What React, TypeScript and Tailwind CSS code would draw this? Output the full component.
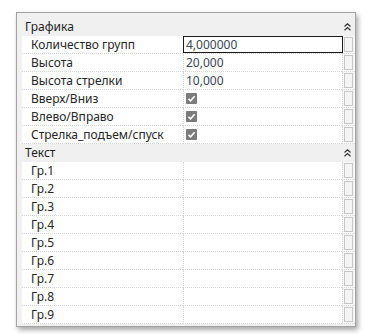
import React from "react";

const font = { fontFamily: '"Segoe UI", "Noto Sans", "Open Sans", sans-serif' };

function Chevrons() {
  return (
    <svg width="7" height="8" viewBox="0 0 7 8" className="block">
      <path d="M0.5 3.5 L3.5 0.8 L6.5 3.5" fill="none" stroke="#333" strokeWidth="1.2" />
      <path d="M0.5 7.2 L3.5 4.5 L6.5 7.2" fill="none" stroke="#333" strokeWidth="1.2" />
    </svg>
  );
}

function Check() {
  return (
    <div className="w-[11px] h-[11px] bg-[#7b7b7b] rounded-[1px] flex items-center justify-center">
      <svg width="9" height="9" viewBox="0 0 9 9">
        <path d="M1.5 4.8 L3.6 6.8 L7.6 2.2" fill="none" stroke="#fff" strokeWidth="1.6" />
      </svg>
    </div>
  );
}

function Header({ title }: { title: string }) {
  return (
    <div className="flex h-[18px] items-center">
      <div className="flex-1 pl-[8px] text-[12px] text-[#1e1e1e] leading-none">{title}</div>
      <div className="w-[13px] flex justify-start pl-[2px]">
        <Chevrons />
      </div>
    </div>
  );
}

type RowProps = { label: string; value?: React.ReactNode; edit?: boolean };

function Row({ label, value, edit }: RowProps) {
  return (
    <div className="flex h-[18px]">
      <div className="w-[5px]" />
      <div className="w-[161px] bg-white border-b border-dotted border-[#d6d6d6] flex items-center pl-[9px] text-[12px] text-[#262626] leading-none">
        {label}
      </div>
      <div className="w-[159px] bg-white border-b border-l border-dotted border-[#d6d6d6] relative flex items-center pl-[2px] text-[12px] text-[#3a4657] leading-none">
        {edit && (
          <div className="absolute left-[-1px] top-0 w-[160px] h-[17px] border border-[#1a1a1a] bg-white" />
        )}
        <div className="relative">{value}</div>
      </div>
      <div className="w-[13px] bg-[#f7f7f7] border-l border-b border-dotted border-[#d6d6d6] flex items-start pl-[1px] pt-[1px]">
        <div className="w-[9px] h-[15px] border border-[#c6c6c6] bg-[#f4f4f4]" />
      </div>
    </div>
  );
}

export default function App() {
  const groups = ["Гр.1", "Гр.2", "Гр.3", "Гр.4", "Гр.5", "Гр.6", "Гр.7", "Гр.8", "Гр.9"];
  return (
    <div className="w-[384px] h-[334px] bg-white pt-[12px] pl-[16px]" style={font}>
      <div className="w-[340px] h-[315px] border border-[#a3a3a3] bg-[#f0f0f0] pt-[5px] shadow-[2px_3px_5px_rgba(0,0,0,0.35)]">
        <Header title="Графика" />
        <Row label="Количество групп" value="4,000000" edit />
        <Row label="Высота" value="20,000" />
        <Row label="Высота стрелки" value="10,000" />
        <Row label="Вверх/Вниз" value={<Check />} />
        <Row label="Влево/Вправо" value={<Check />} />
        <Row label="Стрелка_подъем/спуск" value={<Check />} />
        <Header title="Текст" />
        {groups.map((g) => (
          <Row key={g} label={g} />
        ))}
      </div>
    </div>
  );
}
